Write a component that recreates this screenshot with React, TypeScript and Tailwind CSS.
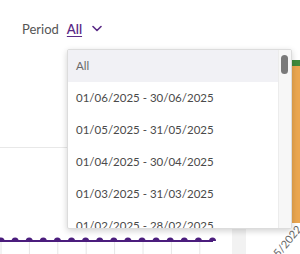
import React from "react";

const PERIODS = [
  "All",
  "01/06/2025 - 30/06/2025",
  "01/05/2025 - 31/05/2025",
  "01/04/2025 - 30/04/2025",
  "01/03/2025 - 31/03/2025",
  "01/02/2025 - 28/02/2025",
  "01/01/2025 - 31/01/2025",
];

function LineStrip() {
  const dots = Array.from({ length: 16 }, (_, i) => 1 + i * 14.1);
  const grid = Array.from({ length: 8 }, (_, i) => 1 + i * 28.4);
  return (
    <svg width="232" height="18" viewBox="0 0 232 18" className="block">
      {grid.map((x) => (
        <line key={x} x1={x} y1="6" x2={x} y2="18" stroke="#e6e6e6" strokeWidth="1" />
      ))}
      <line x1="0" y1="5" x2="213" y2="5" stroke="#4b1d7d" strokeWidth="2" />
      {dots.map((x) => (
        <path key={x} d={`M${x - 3.5} 5 A3.5 3.5 0 0 1 ${x + 3.5} 5 Z`} fill="#4b1d7d" />
      ))}
    </svg>
  );
}

export default function App() {
  return (
    <div className="relative h-[254px] w-[300px] overflow-hidden bg-white font-['Lato',sans-serif]">
      <div className="flex h-[50px] items-start pl-[22px] pt-[20px]">
        <span className="text-[13px] text-[#555]">Period</span>
        <span className="ml-[8px] text-[13px] font-semibold text-[#5a2a86] underline underline-offset-2">All</span>
        <svg width="10" height="7" viewBox="0 0 10 7" className="ml-[10px] mt-[5px]">
          <path d="M1 1.5 L5 5.5 L9 1.5" fill="none" stroke="#5a2a86" strokeWidth="1.6" strokeLinecap="round" strokeLinejoin="round" />
        </svg>
      </div>

      <div className="flex h-[204px]">
        <div className="flex w-[232px] flex-col">
          <div className="h-[97px]" />
          <div className="flex flex-1 flex-col justify-end border-t border-[#e8e8e8]">
            <LineStrip />
          </div>
        </div>
        <div className="mt-[90px] w-[14px] bg-[#f2f2f2]" />
        <div className="relative flex-1">
          <div className="absolute left-[46px] top-[10px] flex h-[163px] w-[12px] flex-col">
            <div className="h-[6px] bg-[#3f8a3c]" />
            <div className="flex-1 bg-[#eaa650]" />
          </div>
          <span className="absolute right-[1px] top-[170px] origin-right -rotate-[50deg] whitespace-nowrap text-[11px] leading-[14px] text-[#666]">
            05/2022
          </span>
        </div>
      </div>

      <div className="absolute left-[67px] top-[49px] flex h-[180px] w-[225px] overflow-hidden rounded-[2px] border border-[#dcdcdc] bg-white shadow-[0_2px_6px_rgba(0,0,0,0.18)]">
        <ul className="flex-1">
          {PERIODS.map((p, i) => (
            <li
              key={p}
              className={`flex h-[32px] items-center pl-[8px] text-[11.5px] ${
                i === 0 ? "bg-[#f1f1f5] text-[#6a6a6a]" : "text-[#4a4a4a]"
              }`}
            >
              {p}
            </li>
          ))}
        </ul>
        <div className="w-[13px] border-l border-[#ececec] bg-[#f7f7f7] pl-[2px] pt-[5px]">
          <div className="h-[19px] w-[7px] rounded-full bg-[#7a7a7a]" />
        </div>
      </div>
    </div>
  );
}
